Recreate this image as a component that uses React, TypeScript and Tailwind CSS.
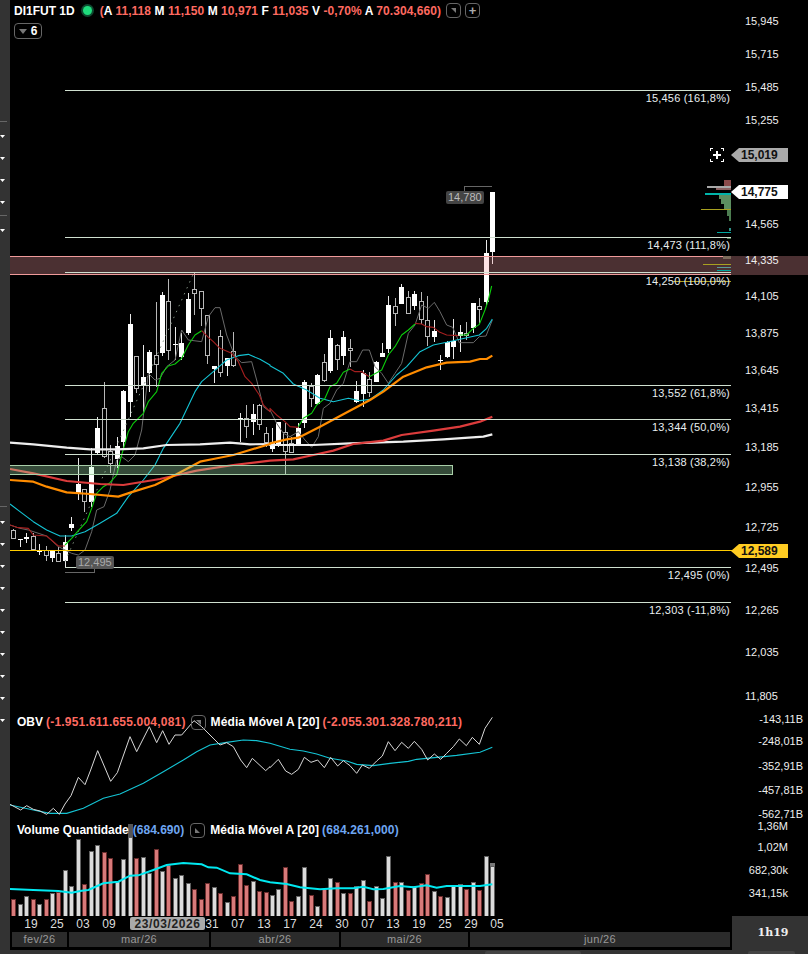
const FONT = "font-['Liberation_Sans',Arial,sans-serif]";

const BAR_STEP = 6.47;
const barX = (i: number) => Math.round(13.2 + i * BAR_STEP);

// traced in two blocks, [high, bodyTop, bodyBottom, low, filled], y in 3x units from the block's origin
type Candle = [number, number, number, number, number];

const candlesMarch: Candle[] = [
  [808, 812, 834, 838, 0], [838, 838, 838, 862, 1], [818, 832, 838, 850, 1], [818, 830, 868, 870, 0],
  [852, 873, 873, 885, 1], [858, 872, 885, 903, 0], [873, 873, 895, 905, 1], [862, 880, 903, 905, 0],
  [825, 845, 903, 922, 1], [772, 793, 804, 812, 1], [595, 673, 702, 720, 1], [688, 688, 725, 755, 0],
  [565, 622, 725, 740, 1], [472, 505, 578, 582, 1], [366, 445, 590, 595, 0], [555, 575, 610, 640, 0],
  [530, 557, 597, 625, 1], [390, 392, 547, 565, 1], [162, 193, 425, 470, 1], [290, 290, 385, 398, 0],
  [255, 352, 375, 455, 1], [270, 277, 338, 395, 1], [125, 287, 313, 380, 0], [97, 105, 278, 287, 1],
  [57, 125, 270, 300, 0], [200, 252, 252, 300, 1], [218, 250, 292, 300, 1], [100, 118, 218, 225, 1],
  [40, 88, 100, 165, 0], [95, 95, 145, 197, 0], [167, 167, 287, 312, 0], [317, 317, 328, 368, 1],
  [210, 230, 337, 350, 0], [293, 293, 318, 348, 1], [217, 275, 315, 320, 0], [458, 473, 473, 545, 1],
  [435, 475, 498, 535, 0], [433, 463, 487, 525, 1], [432, 437, 492, 510, 0], [502, 520, 548, 562, 0],
];

const candlesApril: Candle[] = [
  [775, 818, 838, 845, 1], [755, 757, 822, 830, 1], [758, 788, 845, 912, 0], [800, 820, 848, 850, 0],
  [760, 773, 825, 825, 1], [630, 637, 758, 775, 1], [640, 650, 685, 710, 0], [612, 615, 703, 705, 1],
  [552, 577, 632, 637, 0], [480, 505, 603, 610, 1], [522, 527, 568, 600, 0], [482, 502, 557, 585, 1],
  [507, 535, 542, 590, 0], [633, 663, 697, 700, 1], [600, 610, 673, 710, 1], [605, 628, 668, 680, 0],
  [573, 577, 635, 635, 1], [520, 550, 560, 562, 1], [378, 405, 537, 550, 1], [385, 410, 430, 467, 0],
  [343, 350, 403, 403, 1], [362, 382, 430, 432, 0], [362, 373, 407, 420, 1], [367, 395, 448, 462, 0],
  [378, 452, 500, 527, 0], [450, 482, 500, 515, 1], [555, 570, 570, 600, 1], [512, 517, 560, 565, 1],
  [447, 512, 532, 567, 1], [465, 485, 498, 545, 1], [457, 490, 495, 510, 0], [400, 400, 475, 490, 1],
  [385, 410, 417, 460, 0], [210, 250, 397, 405, 1], [67, 67, 247, 282, 1],
];

const candles: Candle[] = [
  ...candlesMarch.map(([a, b, c, d, e]): Candle => [260 + a / 3, 260 + b / 3, 260 + c / 3, 260 + d / 3, e]),
  ...candlesApril.map(([a, b, c, d, e]): Candle => [170 + a / 3, 170 + b / 3, 170 + c / 3, 170 + d / 3, e]),
];

// top of each volume bar (3x units from y=700), r = red bar
const volumes: [number, 0 | 1][] = [
  [598, 1], [613, 0], [589, 0], [598, 1], [613, 0], [598, 1], [580, 0], [577, 1], [511, 0], [559, 0],
  [418, 0], [553, 1], [454, 0], [436, 0], [457, 1], [475, 1], [545, 0], [478, 0], [412, 0], [475, 1],
  [472, 0], [520, 0], [448, 1], [514, 0], [496, 1], [535, 0], [526, 0], [550, 0], [568, 1], [598, 1],
  [550, 1], [562, 0], [580, 1], [607, 0], [589, 1], [493, 1], [556, 1], [544, 0], [574, 1], [577, 1],
  [586, 0], [568, 0], [502, 1], [604, 1], [589, 0], [502, 0], [586, 1], [619, 0], [568, 1], [535, 0],
  [547, 1], [580, 0], [580, 1], [560, 0], [541, 0], [604, 1], [559, 0], [595, 0], [469, 0], [547, 1],
  [547, 0], [571, 1], [559, 0], [550, 1], [523, 1], [574, 0], [589, 1], [592, 0], [559, 0], [553, 0],
  [568, 1], [547, 0], [571, 1], [469, 0], [500, 0],
];

const trace = (s: string, dx: number, dy: number) =>
  s
    .trim()
    .split(/\s+/)
    .map((p) => {
      const [a, b] = p.split(",").map(Number);
      return `${dx + a / 3},${dy + b / 3}`;
    })
    .join(" ");
const L = (s: string) => trace(s, 0, 260);
const R = (s: string) => trace(s, 270, 170);
const LB = (s: string) => trace(s, 0, 700);
const RB = (s: string) => trace(s, 270, 700);

const priceLines: { points: string; color: string; width: number }[] = [
  {
    color: "#6a6a6a",
    width: 1,
    points:
      L("30,795 60,805 85,810 140,828 175,860 195,870 215,880 235,885 255,870 275,815 290,750 312,740 330,690 350,600 365,590 385,605 405,585 425,510 445,340 465,360 480,355 500,320 525,300 545,210 565,240 605,245 625,170 645,143 660,143 680,225 705,290 725,308 755,305 770,360 790,440 810,455") +
      " " +
      R("0,720 20,760 40,790 60,800 85,785 105,810 125,832 145,800 160,715 180,700 200,660 220,640 240,575 260,575 278,540 298,540 315,590 335,610 355,640 375,610 395,580 415,490 435,465 455,405 475,415 493,397 510,425 530,465 548,472 568,518 610,518 628,500 648,498 667,450"),
  },
  {
    color: "#14c4d4",
    width: 1.1,
    points:
      L("30,732 60,755 100,785 140,810 180,828 215,828 255,815 300,790 350,760 385,710 430,660 465,615 490,565 540,490 585,395 605,365 640,335 680,300 715,287 745,283 780,298 810,315") +
      " " +
      R("0,587 40,610 70,642 110,660 150,685 190,695 235,685 270,692 300,688 340,660 380,615 410,590 450,545 490,525 530,517 570,508 628,495 650,475 667,447"),
  },
  { color: "#a51f1f", width: 1.1, points: L("30,795 50,802 85,805 100,825 140,828 175,858 195,858") },
  {
    color: "#0ccc0c",
    width: 1.1,
    points: L("195,855 215,835 235,812 260,785 275,745 290,700 310,680 330,668 350,645 365,585 385,515 400,490 430,460 445,425 470,395 485,340 505,318 525,312 545,295 565,255 585,225 605,212"),
  },
  {
    color: "#a51f1f",
    width: 1.1,
    points:
      L("605,212 625,232 640,245 660,265 695,280 715,305 735,350 755,370 778,405 790,435 810,455") +
      " " +
      R("0,715 20,735 45,755 60,770 85,772"),
  },
  { color: "#0ccc0c", width: 1.1, points: R("85,770 100,745 125,730 140,705 165,685 180,650 200,640 220,607 240,597") },
  { color: "#a51f1f", width: 1.1, points: R("240,597 255,605 275,605 298,620") },
  { color: "#0ccc0c", width: 1.1, points: R("298,620 320,608 335,600 355,555 375,530 395,495 415,480 435,462") },
  { color: "#a51f1f", width: 1.1, points: R("435,460 455,462 470,470 490,472 510,487 530,495 565,497") },
  { color: "#0ccc0c", width: 1.1, points: R("568,495 590,495 610,475 628,463 645,420 655,390 665,348") },
  {
    color: "#eeeeee",
    width: 2.2,
    points:
      L("30,548 100,553 200,563 270,568 350,568 430,565 500,555 600,553 690,548 750,553 810,552") +
      " " +
      R("0,825 130,825 240,820 400,815 520,808 640,800 667,793"),
  },
  {
    color: "#dc3c3c",
    width: 2.2,
    points:
      L("30,627 100,640 200,663 300,672 370,675 480,657 590,632 700,615 810,602") +
      " " +
      R("0,872 70,868 130,855 190,842 250,822 340,812 395,795 490,782 570,770 630,755 667,740"),
  },
  {
    color: "#ff8c00",
    width: 2.2,
    points:
      L("30,660 100,665 140,680 200,697 270,702 355,710 400,695 465,675 520,648 600,605 640,597 700,585 810,552") +
      " " +
      R("0,820 50,808 85,803 150,770 210,738 300,690 340,665 400,620 470,592 530,578 600,575 630,567 650,567 667,557"),
  },
];

const obvLine =
  LB("30,313 62,330 80,317 100,328 120,333 140,343 160,325 178,343 195,312 213,287 235,232 255,254 272,210 293,152 332,244 352,218 390,110 410,155 448,80 470,128 488,92 507,133 525,105 545,105 582,62 605,80 660,135 680,128 700,140 722,180 740,203 757,175 797,212 810,200") +
  " " +
  RB("0,203 25,178 47,213 65,223 85,208 103,172 123,187 143,180 163,203 182,172 203,198 220,182 240,197 260,220 277,195 298,205 320,183 337,168 355,125 375,152 395,127 415,145 433,124 455,148 473,180 493,162 512,178 530,160 550,140 568,117 589,137 607,112 628,133 645,85 667,52");

const obvAverage =
  LB("30,315 100,330 150,340 200,340 250,325 310,295 360,282 430,250 490,215 550,180 590,155 630,135 680,127 730,120 770,122 810,130") +
  " " +
  RB("0,130 60,148 100,153 140,162 180,175 230,183 260,193 310,197 360,190 415,184 440,178 500,172 560,166 630,157 667,142");

const volumeAverage =
  LB("30,567 100,570 175,573 215,578 245,572 265,570 310,550 355,545 390,527 415,526 460,510 500,495 550,489 605,493 625,502 650,503 690,520 740,523 780,540 810,547") +
  " " +
  RB("0,547 50,552 90,562 150,568 200,565 250,565 280,560 310,568 340,567 390,558 430,562 470,556 500,563 530,558 570,558 630,558 667,553");

const fibLevels = [
  { y: 90.5, labelY: 98, label: "15,456 (161,8%)" },
  { y: 237.5, labelY: 245, label: "14,473 (111,8%)" },
  { y: 272.5, labelY: 281, label: "14,250 (100,0%)" },
  { y: 385.5, labelY: 393, label: "13,552 (61,8%)" },
  { y: 419.5, labelY: 427, label: "13,344 (50,0%)" },
  { y: 454.5, labelY: 462, label: "13,138 (38,2%)" },
  { y: 567.5, labelY: 575, label: "12,495 (0%)" },
  { y: 602.5, labelY: 610, label: "12,303 (-11,8%)" },
];

const priceTicks: [string, number][] = [
  ["15,945", 21], ["15,715", 54], ["15,485", 87], ["15,255", 120], ["14,565", 224], ["14,335", 260],
  ["14,105", 296], ["13,875", 333], ["13,645", 370], ["13,415", 408], ["13,185", 447], ["12,955", 487],
  ["12,725", 527], ["12,495", 568], ["12,265", 610], ["12,035", 652], ["11,805", 696],
];

const obvTicks: [string, number][] = [
  ["-143,11B", 719], ["-248,01B", 741], ["-352,91B", 766], ["-457,81B", 790], ["-562,71B", 814],
];
const volumeTicks: [string, number][] = [
  ["1,36M", 826], ["1,02M", 847], ["682,30k", 870], ["341,15k", 893],
];

const dateTicks: [string, number][] = [
  ["19", 31], ["25", 57], ["03", 83], ["09", 109], ["31", 212], ["07", 238], ["13", 264], ["17", 290],
  ["24", 316], ["30", 342], ["07", 368], ["13", 393], ["19", 419], ["25", 445], ["29", 471], ["05", 497],
];

function CornerButton({ className = "", flip = false }: { className?: string; flip?: boolean }) {
  return (
    <span className={`inline-flex h-[15px] w-[15px] items-center justify-center rounded-[4px] border border-[#666] ${className}`}>
      <svg width="7" height="7" viewBox="0 0 7 7">
        <path d={flip ? "M1 1 L1 6 L6 6 Z" : "M1 1 L6 1 L6 6 Z"} fill="#777" />
      </svg>
    </span>
  );
}

function Chart() {
  return (
    <svg className="absolute inset-0 h-[916px] w-[798px]" viewBox="10 0 798 916">
      {/* candles */}
      <g shapeRendering="crispEdges">
        {candles.map(([high, top, bottom, low, filled], i) => {
          const x = barX(i);
          const doji = bottom - top < 1;
          return (
            <g key={i}>
              <rect x={x} y={high} width={1} height={low - high} fill={filled ? "#e8e8e8" : "#b8b8b8"} />
              {doji ? (
                <rect x={x - 2} y={top} width={5} height={1} fill="#fff" />
              ) : filled ? (
                <rect x={x - 2} y={top} width={5} height={bottom - top} fill="#fff" />
              ) : (
                <rect x={x - 1.5} y={top} width={4} height={bottom - top} fill="#000" stroke="#b8b8b8" />
              )}
            </g>
          );
        })}
      </g>

      {/* diagonal study line */}
      <line x1={65} y1={561.5} x2={193.5} y2={273.5} stroke="#7f8f80" strokeWidth={1} strokeDasharray="1.5 5" />

      {priceLines.map((l, i) => (
        <polyline key={i} points={l.points} fill="none" stroke={l.color} strokeWidth={l.width} strokeLinejoin="round" />
      ))}

      {/* zones and fib levels */}
      <g shapeRendering="crispEdges">
        <rect x={10} y={256} width={798} height={19} fill="#f89ea4" fillOpacity={0.3} />
        <rect x={10} y={256} width={721} height={1} fill="#f09a9a" />
        <rect x={10} y={274} width={721} height={1} fill="#f09a9a" />
        <rect x={10} y={465} width={443} height={10} fill="#b1f7be" fillOpacity={0.3} />
        <rect x={10} y={465} width={443} height={1} fill="#a9cfa9" />
        <rect x={10} y={474} width={443} height={1} fill="#a9cfa9" />
        <rect x={452} y={465} width={1} height={10} fill="#a9cfa9" />
        {fibLevels.map((f) => (
          <rect key={f.y} x={65} y={f.y - 0.5} width={666} height={1} fill="#d0e0d0" />
        ))}
        <rect x={10} y={550} width={722} height={1} fill="#ffcc00" />

        {/* volume at price */}
        <rect x={724} y={180} width={7} height={7} fill="#8a4a4a" />
        <rect x={707} y={186} width={24} height={2} fill="#a8a8a8" />
        <rect x={716} y={188} width={15} height={2} fill="#8a6060" />
        <rect x={705} y={193} width={26} height={2} fill="#00b4aa" />
        <rect x={719} y={195} width={12} height={4} fill="#5c8f60" />
        <rect x={721} y={199} width={10} height={5} fill="#5c8f60" />
        <rect x={724} y={204} width={7} height={5} fill="#5c8f60" />
        <rect x={701} y={209} width={30} height={1} fill="#a8a020" />
        <rect x={727} y={210} width={4} height={6} fill="#4c7c50" />
        <rect x={729} y={216} width={2} height={5} fill="#4c7c50" />
        <rect x={729} y={228} width={2} height={3} fill="#2f8f88" />
        <rect x={717} y={232} width={14} height={1} fill="#00a8a0" />
        <rect x={727} y={238} width={4} height={1} fill="#4c7c50" />
        <rect x={723} y={256} width={8} height={3} fill="#7a6a5a" />
        <rect x={703} y={264} width={28} height={1} fill="#a8a020" />
        <rect x={717} y={267} width={14} height={1} fill="#5a9a98" />
        <rect x={717} y={270} width={14} height={1} fill="#00a8a0" />
        <rect x={673} y={281} width={58} height={1} fill="#a8a020" />
      </g>

      {/* high / low brackets */}
      <g stroke="#666" strokeWidth={1} fill="none" shapeRendering="crispEdges">
        <path d="M464.5 190.5 V186.5 H491.5" />
        <path d="M65 572.5 H94.5 V568" />
      </g>

      {/* crosshair button */}
      <g stroke="#fff" strokeWidth={1} fill="none" shapeRendering="crispEdges">
        <path d="M710.5 151 V148.5 H713 M721 148.5 H723.5 V151 M723.5 159 V161.5 H721 M713 161.5 H710.5 V159" />
      </g>
      <path d="M717 151 V159 M713 155 H721" stroke="#fff" strokeWidth={2} />

      {/* OBV panel */}
      <polyline points={obvAverage} fill="none" stroke="#14c4d4" strokeWidth={1.1} />
      <polyline points={obvLine} fill="none" stroke="#d8d8d8" strokeWidth={1} />

      {/* volume panel */}
      <g shapeRendering="crispEdges">
        <rect x={128} y={824} width={5} height={14} fill="#555" />
        {volumes.map(([top, red], i) => {
          const y = 700 + top / 3;
          return (
            <rect
              key={i}
              x={barX(i) - 1.5}
              y={y}
              width={4}
              height={916 - y}
              fill={red ? "#d87a7a" : "#dcdcdc"}
              stroke={red ? "#6a2c2c" : "#606060"}
            />
          );
        })}
        <rect x={490} y={863} width={5} height={3} fill="#777" />
      </g>
      <polyline points={volumeAverage} fill="none" stroke="#00e8f0" strokeWidth={2} />
    </svg>
  );
}

function Legend() {
  const num = "text-[#ff6a60]";
  return (
    <>
      <div className="absolute left-[4px] top-[3px] flex h-[15px] items-center whitespace-nowrap text-[12px] font-bold text-white">
        <span>DI1FUT 1D</span>
        <span className="ml-[8px] mr-[8px] h-[9px] w-[9px] rounded-full bg-[#1fdc7c] shadow-[0_0_0_2px_#0e4a30]" />
        <span className="tracking-[0.05px]">
          <span className={num}>(</span>A <span className={num}>11,118</span> M <span className={num}>11,150</span> M{" "}
          <span className={num}>10,971</span> F <span className={num}>11,035</span> V{" "}
          <span className={num}>-0,70%</span> A <span className={num}>70.304,660)</span>
        </span>
        <CornerButton className="ml-[5px]" />
        <span className="ml-[4px] inline-flex h-[15px] w-[15px] items-center justify-center rounded-[4px] border border-[#666] text-[13px] leading-none text-[#aaa]">
          +
        </span>
      </div>
      <div className="absolute left-[4px] top-[23px] flex h-[16px] w-[28px] items-center justify-center gap-[4px] rounded-[4px] border border-[#666] text-[12px] font-bold text-white">
        <svg width="8" height="5" viewBox="0 0 8 5">
          <path d="M0 0 H8 L4 5 Z" fill="#777" />
        </svg>
        6
      </div>
      <div className="absolute left-[7px] top-[714px] flex h-[16px] items-center whitespace-nowrap text-[12px] font-bold text-white">
        <span>OBV</span>
        <span className={`ml-[3px] tracking-[0.2px] ${num}`}>(-1.951.611.655.004,081)</span>
        <CornerButton className="ml-[5px]" />
        <span className="ml-[5px] tracking-[0.1px]">Média Móvel A [20]</span>
        <span className={`ml-[3px] tracking-[0.2px] ${num}`}>(-2.055.301.328.780,211)</span>
      </div>
      <div className="absolute left-[7px] top-[822px] flex h-[16px] items-center whitespace-nowrap text-[12px] font-bold text-white">
        <span>Volume Quantidade</span>
        <span className="ml-[4px] text-[#6ea6f2]">(684.690)</span>
        <CornerButton className="ml-[6px]" flip />
        <span className="ml-[5px] tracking-[0.1px]">Média Móvel A [20]</span>
        <span className="ml-[3px] tracking-[0.15px] text-[#6ea6f2]">(684.261,000)</span>
      </div>
    </>
  );
}

function PriceTag({ y, bg, text }: { y: number; bg: string; text: string }) {
  return (
    <div
      className={`absolute left-[721px] flex h-[14px] w-[57px] items-center pl-[10px] text-[12px] font-bold leading-none text-[#111] [clip-path:polygon(0_50%,8px_0,100%_0,100%_100%,8px_100%)] ${bg}`}
      style={{ top: y }}
    >
      {text}
    </div>
  );
}

function AxisText() {
  return (
    <div className="text-[11px] leading-none text-[#eee]">
      {fibLevels.map((f) => (
        <div
          key={f.y}
          className="absolute right-[78px] -translate-y-1/2 whitespace-nowrap tracking-[0.2px] text-[#e8eef0]"
          style={{ top: f.labelY }}
        >
          {f.label}
        </div>
      ))}
      {priceTicks.map(([label, y]) => (
        <div key={label} className="absolute left-[735px] -translate-y-1/2" style={{ top: y }}>
          {label}
        </div>
      ))}
      {obvTicks.map(([label, y]) => (
        <div key={label} className="absolute right-[5px] -translate-y-1/2" style={{ top: y }}>
          {label}
        </div>
      ))}
      {volumeTicks.map(([label, y]) => (
        <div key={label} className="absolute right-[20px] -translate-y-1/2" style={{ top: y }}>
          {label}
        </div>
      ))}
      <PriceTag y={148} bg="bg-[#aaaaaa]" text="15,019" />
      <PriceTag y={185} bg="bg-white" text="14,775" />
      <PriceTag y={544} bg="bg-[#ffcc22]" text="12,589" />
      <div className="absolute left-[436px] top-[191px] rounded-[2px] bg-[#444] px-[2px] py-px text-[#bbb]">14,780</div>
      <div className="absolute left-[66px] top-[556px] rounded-[2px] bg-[#555] px-[2px] py-px text-[#aaa]">12,495</div>
    </div>
  );
}

function Rail() {
  const marker = (
    <svg width="5" height="3" viewBox="0 0 5 3" className="shrink-0">
      <path d="M0 0 H5 L2.5 3 Z" fill="#fff" />
    </svg>
  );
  const sep = <div className="h-px w-[7px] bg-[#666]" />;
  const lower = [0, 1, 2, 3, 4, 5, 6, 7, 8, 9];
  return (
    <div className="flex w-[10px] shrink-0 flex-col items-start bg-[#333] pt-[121px]">
      {sep}
      <div className="mt-[13px] flex flex-col gap-[19px]">
        <div className="flex flex-col gap-[19px]">
          {marker}
          {marker}
          {marker}
          {marker}
        </div>
      </div>
      <div className="mt-[11px]">{sep}</div>
      <div className="mt-[13px]">{marker}</div>
      <div className="mt-[274px]">{sep}</div>
      <div className="mt-[14px] flex flex-col gap-[19px]">
        {lower.map((n) => (
          <span key={n} className="block h-[3px]">
            {marker}
          </span>
        ))}
      </div>
    </div>
  );
}

export default function App() {
  return (
    <div className={`flex h-[954px] w-[808px] overflow-hidden bg-black ${FONT}`}>
      <Rail />
      <div className="flex min-w-0 flex-1 flex-col">
        <div className="relative h-[916px] shrink-0">
          <Chart />
          <AxisText />
          <Legend />
        </div>

        <div className="flex h-[34px] shrink-0">
          <div className="flex w-[722px] flex-col">
            <div className="relative h-[16px] text-[12px] leading-[14px] text-[#ddd]">
              {dateTicks.map(([label, x], i) => (
                <span key={i} className="absolute top-px -translate-x-1/2" style={{ left: x - 10 }}>
                  {label}
                </span>
              ))}
              <span className="absolute left-[120px] top-px flex h-[13px] w-[75px] items-center justify-center rounded-[2px] bg-[#aaa] text-[12px] font-bold tracking-[0.6px] text-[#222]">
                23/03/2026
              </span>
            </div>
            <div className="flex h-[15px] gap-[2px] pl-[2px] text-[11px] leading-[15px] tracking-[0.3px] text-[#999]">
              <div className="w-[55px] bg-[#2b2b2b] text-center">fev/26</div>
              <div className="w-[140px] bg-[#2b2b2b] text-center">mar/26</div>
              <div className="w-[128px] bg-[#2b2b2b] text-center">abr/26</div>
              <div className="w-[127px] bg-[#2b2b2b] text-center">mai/26</div>
              <div className="w-[260px] bg-[#2b2b2b] text-center">jun/26</div>
            </div>
          </div>
          <div className="flex flex-1 items-center justify-center bg-[#333] pl-[6px] pt-px font-['DejaVu_Serif',serif] text-[11px] font-bold text-[#eee]">
            1h19
          </div>
        </div>

        <div className="flex h-[4px] shrink-0 justify-end gap-[167px] bg-[#333]">
          <div className="mt-px w-[96px] rounded-t-[2px] bg-[#444]" />
          <div className="mt-px mr-[13px] w-[47px] rounded-t-[2px] bg-[#444]" />
        </div>
      </div>
    </div>
  );
}
